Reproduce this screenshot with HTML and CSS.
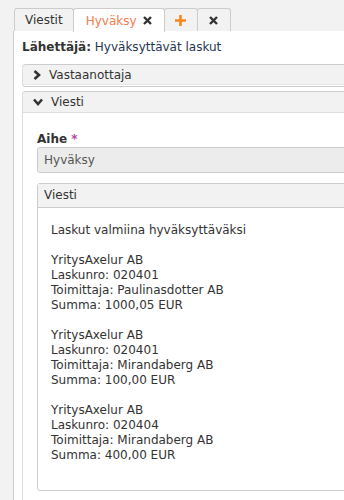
FILE: index.html
```html
<!DOCTYPE html>
<html lang="fi">
<head>
    <meta charset="UTF-8">
    <title>Hyväksy</title>
    <link rel="stylesheet" href="styles.css">
</head>
<body>

    <div class="tabs">
        <div class="tab">Viestit</div>
        <div class="tab active">Hyväksy
            <svg class="tab-close" width="9" height="9" viewBox="0 0 9 9"><path d="M1 1L8 8M8 1L1 8" stroke="#333" stroke-width="2.4"/></svg>
        </div>
        <div class="tab icon-tab">
            <svg width="11" height="11" viewBox="0 0 11 11"><path d="M5.5 0V11M0 5.5H11" stroke="#f7861e" stroke-width="2.6"/></svg>
        </div>
        <div class="tab icon-tab">
            <svg width="9" height="9" viewBox="0 0 9 9"><path d="M1 1L8 8M8 1L1 8" stroke="#333" stroke-width="2.4"/></svg>
        </div>
    </div>

    <div class="content">
        <div class="sender"><b>Lähettäjä:</b> <span class="sender-value">Hyväksyttävät laskut</span></div>

        <div class="panel collapsed">
            <div class="panel-head">
                <svg class="chevron" width="8" height="10" viewBox="0 0 8 10"><path d="M1.5 1L6 5L1.5 9" fill="none" stroke="#333" stroke-width="2.6"/></svg>
                Vastaanottaja
            </div>
        </div>

        <div class="panel">
            <div class="panel-head">
                <svg class="chevron" width="10" height="8" viewBox="0 0 10 8"><path d="M1 1.5L5 6L9 1.5" fill="none" stroke="#333" stroke-width="2.6"/></svg>
                Viesti
            </div>
            <div class="panel-body">
                <label class="field-label">Aihe <span class="req">*</span></label>
                <div class="input">Hyväksy</div>

                <div class="box">
                    <div class="box-head">Viesti</div>
                    <div class="box-body">
                        <p>Laskut valmiina hyväksyttäväksi</p>
                        <p>YritysAxelur AB<br>Laskunro: 020401<br>Toimittaja: Paulinasdotter AB<br>Summa: 1000,05 EUR</p>
                        <p>YritysAxelur AB<br>Laskunro: 020401<br>Toimittaja: Mirandaberg AB<br>Summa: 100,00 EUR</p>
                        <p>YritysAxelur AB<br>Laskunro: 020404<br>Toimittaja: Mirandaberg AB<br>Summa: 400,00 EUR</p>
                    </div>
                </div>
            </div>
        </div>
    </div>

</body>
</html>
```

FILE: styles.css
```css
body {
    font-family: 'DejaVu Sans', Verdana, sans-serif;
    font-size: 12px;
    margin: 0;
    background: #f2f2f2;
    color: #333;
    overflow: hidden;
}
.tabs {
    display: flex;
    padding: 8px 0 0 14px;
    height: 23px;
    box-sizing: content-box;
}
.tab {
    display: flex;
    align-items: center;
    justify-content: center;
    gap: 6px;
    padding: 0 10px;
    border: 1px solid #ccc;
    border-bottom: none;
    border-radius: 3px 3px 0 0;
    background: #f2f2f2;
    margin-right: -1px;
    color: #333;
}
.tab.active {
    background: #fff;
    color: #f07c50;
    width: 92px;
    padding: 0;
    box-sizing: border-box;
    height: 24px;
    position: relative;
    z-index: 1;
}
.icon-tab {
    width: 34px;
    padding: 0;
    box-sizing: border-box;
}
.content {
    background: #fff;
    border-left: 1px solid #ccc;
    margin-left: 13px;
    padding: 9px 0 0 8px;
    min-height: 480px;
    overflow: hidden;
}
.sender {
    line-height: 15px;
    margin-bottom: 9px;
}
.sender-value {
    color: #1f3550;
}
.panel {
    margin: 0 -20px 4px 0;
    border-left: 1px solid #ddd;
    border-bottom: 1px solid #ccc;
    border-radius: 3px;
}
.panel-head {
    display: flex;
    align-items: center;
    gap: 8px;
    height: 20px;
    padding-left: 10px;
    background: #f2f2f2;
    border-top: 1px solid #ccc;
    border-bottom: 1px solid #ddd;
    border-radius: 3px 0 0 0;
}
.collapsed .panel-head {
    border-bottom: 1px dotted #ddd;
    height: 19px;
}
.collapsed {
    padding-bottom: 1px;
}
.panel-body {
    padding: 19px 0 30px 14px;
}
.field-label {
    display: block;
    font-weight: bold;
    line-height: 15px;
}
.req {
    color: #b0489c;
}
.input {
    height: 24px;
    line-height: 24px;
    padding-left: 6px;
    background: #ececec;
    border: 1px solid #ccc;
    border-radius: 3px;
    color: #555;
}
.box {
    margin-top: 10px;
    border: 1px solid #ccc;
    border-radius: 3px;
}
.box-head {
    height: 23px;
    line-height: 23px;
    padding-left: 6px;
    background: #f2f2f2;
    border-bottom: 1px solid #ccc;
}
.box-body {
    padding: 15px 13px 27px;
    line-height: 15px;
}
.box-body p {
    margin: 0 0 15px;
}
.box-body p:last-child {
    margin-bottom: 0;
}
```
